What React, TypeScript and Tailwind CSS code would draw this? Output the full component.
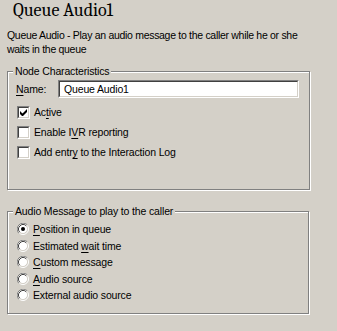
import React from 'react';

const Check: React.FC<{ checked?: boolean }> = ({ checked }) => (
  <span className="relative block w-[13px] h-[13px] bg-white border border-t-[#808080] border-l-[#808080] border-b-white border-r-white">
    <span className="absolute inset-0 border border-t-[#404040] border-l-[#404040] border-b-[#d4d0c8] border-r-[#d4d0c8]" />
    {checked && (
      <svg className="absolute left-[2px] top-[2px]" width="7" height="7" viewBox="0 0 7 7">
        <path d="M0 2v3l2 2h1l4-4V0L2.5 4.5z" fill="#000" />
      </svg>
    )}
  </span>
);

const Radio: React.FC<{ checked?: boolean }> = ({ checked }) => (
  <svg width="12" height="12" viewBox="0 0 12 12" className="block">
    <circle cx="6" cy="6" r="5.5" fill="none" stroke="#ffffff" />
    <path d="M1.76 10.24A6 6 0 0 1 10.24 1.76" fill="none" stroke="#808080" />
    <circle cx="6" cy="6" r="4.5" fill="#ffffff" />
    <path d="M2.82 9.18A4.5 4.5 0 0 1 9.18 2.82" fill="none" stroke="#404040" />
    <path d="M9.18 2.82A4.5 4.5 0 0 1 2.82 9.18" fill="none" stroke="#d4d0c8" />
    {checked && <circle cx="6" cy="6" r="2" fill="#000" />}
  </svg>
);

const Label: React.FC<{ text: string; key_?: number }> = ({ text, key_ }) => {
  if (key_ === undefined) return <span>{text}</span>;
  return (
    <span>
      {text.slice(0, key_)}
      <span className="underline underline-offset-[2px]">{text[key_]}</span>
      {text.slice(key_ + 1)}
    </span>
  );
};

const checks = [
  { text: 'Active', key_: 2, checked: true },
  { text: 'Enable IVR reporting', key_: 8, checked: false },
  { text: 'Add entry to the Interaction Log', key_: 8, checked: false },
];

const radios = [
  { text: 'Position in queue', key_: 0, checked: true },
  { text: 'Estimated wait time', key_: 10, checked: false },
  { text: 'Custom message', key_: 0, checked: false },
  { text: 'Audio source', key_: 0, checked: false },
  { text: 'External audio source', key_: undefined, checked: false },
];

export default function App() {
  return (
    <div className='w-[337px] h-[331px] bg-[#d4d0c8] text-black text-[10.5px] tracking-[-0.15px] leading-[14px] overflow-hidden font-["Liberation_Sans",sans-serif]'>
      <h1 className="h-[22px] pl-[13px] text-[18px] leading-[22px] tracking-normal font-normal font-serif">
        Queue Audio1
      </h1>

      <p className="mt-[6px] ml-[7px] w-[308px] tracking-[-0.3px]">
        Queue Audio - Play an audio message to the caller while he or she waits in the queue
      </p>

      <div className="relative mt-[15px] ml-[7px] w-[303px] h-[119px] border border-[#808080] shadow-[1px_1px_0_#fff,inset_1px_1px_0_#fff] pt-[8px]">
        <span className="absolute -top-[8px] left-[5px] px-[2px] bg-[#d4d0c8]">Node Characteristics</span>
        <div className="flex items-center h-[18px]">
          <span className="ml-[8px] w-[42px]">
            <Label text="Name:" key_={0} />
          </span>
          <div className="relative w-[241px] h-[18px] bg-white border border-t-[#808080] border-l-[#808080] border-b-white border-r-white">
            <span className="absolute inset-0 border border-t-[#404040] border-l-[#404040] border-b-[#d4d0c8] border-r-[#d4d0c8]" />
            <span className="absolute left-[5px] top-[1px]">Queue Audio1</span>
          </div>
        </div>
        <div className="mt-[4px] flex flex-col">
          {checks.map((c) => (
            <div key={c.text} className="flex items-center h-[20px] pl-[9px] gap-[3px]">
              <Check checked={c.checked} />
              <span className="ml-[1px]">
                <Label text={c.text} key_={c.key_} />
              </span>
            </div>
          ))}
        </div>
      </div>

      <div className="relative mt-[21px] ml-[7px] w-[302px] h-[103px] border border-[#808080] shadow-[1px_1px_0_#fff,inset_1px_1px_0_#fff] pt-[9px]">
        <span className="absolute -top-[8px] left-[5px] px-[2px] bg-[#d4d0c8]">Audio Message to play to the caller</span>
        <div className="flex flex-col">
          {radios.map((r) => (
            <div key={r.text} className="flex items-center h-[16.5px] pl-[9px] gap-[4px]">
              <Radio checked={r.checked} />
              <Label text={r.text} key_={r.key_} />
            </div>
          ))}
        </div>
      </div>
    </div>
  );
}
